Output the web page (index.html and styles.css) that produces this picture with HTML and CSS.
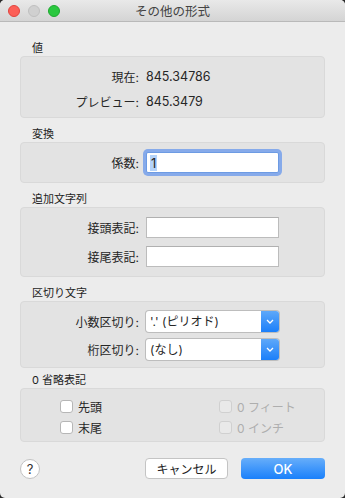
FILE: index.html
```html
<!DOCTYPE html>
<html lang="ja">
<head>
  <meta charset="UTF-8" />
  <title>その他の形式</title>
  <link rel="stylesheet" href="styles.css">
</head>
<body>
  <div class="window">
    <div class="titlebar">
      <div class="lights">
        <span class="light close"></span>
        <span class="light minimize"></span>
        <span class="light zoom"></span>
      </div>
      <div class="title">その他の形式</div>
      <div class="spacer"></div>
    </div>

    <div class="content">
      <div class="group">
        <div class="group-label">値</div>
        <div class="group-box values">
          <div class="field">
            <span class="field-label">現在:</span>
            <span class="value">845.34786</span>
          </div>
          <div class="field">
            <span class="field-label">プレビュー:</span>
            <span class="value">845.3479</span>
          </div>
        </div>
      </div>

      <div class="group">
        <div class="group-label">変換</div>
        <div class="group-box">
          <div class="field">
            <span class="field-label">係数:</span>
            <div class="input focused"><span class="selected">1</span></div>
          </div>
        </div>
      </div>

      <div class="group">
        <div class="group-label">追加文字列</div>
        <div class="group-box">
          <div class="field">
            <span class="field-label">接頭表記:</span>
            <div class="input"></div>
          </div>
          <div class="field">
            <span class="field-label">接尾表記:</span>
            <div class="input"></div>
          </div>
        </div>
      </div>

      <div class="group">
        <div class="group-label">区切り文字</div>
        <div class="group-box selects">
          <div class="field">
            <span class="field-label">小数区切り:</span>
            <div class="select">
              <span class="select-text">'.' (ピリオド)</span>
              <span class="select-arrow">
                <svg width="8" height="5" viewBox="0 0 8 5"><path d="M1 1 L4 4 L7 1" fill="none" stroke="#fff" stroke-width="1.3"/></svg>
              </span>
            </div>
          </div>
          <div class="field">
            <span class="field-label">桁区切り:</span>
            <div class="select">
              <span class="select-text">(なし)</span>
              <span class="select-arrow">
                <svg width="8" height="5" viewBox="0 0 8 5"><path d="M1 1 L4 4 L7 1" fill="none" stroke="#fff" stroke-width="1.3"/></svg>
              </span>
            </div>
          </div>
        </div>
      </div>

      <div class="group group-tight">
        <div class="group-label">0 省略表記</div>
        <div class="group-box checks">
          <label class="check"><span class="box"></span>先頭</label>
          <label class="check disabled"><span class="box"></span>0 フィート</label>
          <label class="check"><span class="box"></span>末尾</label>
          <label class="check disabled"><span class="box"></span>0 インチ</label>
        </div>
      </div>

      <div class="footer">
        <button class="help">?</button>
        <div class="actions">
          <button class="btn">キャンセル</button>
          <button class="btn primary">OK</button>
        </div>
      </div>
    </div>
  </div>
</body>
</html>
```

FILE: styles.css
```css
html {
  background: #2a2a2a;
}

body {
  margin: 0;
  font-family: "Inter", "Noto Sans CJK JP", sans-serif;
  font-size: 12px;
  color: #262626;
}

.window {
  width: 345px;
  height: 498px;
  background: #ececec;
  border-radius: 5px;
  overflow: hidden;
}

.titlebar {
  display: flex;
  align-items: center;
  height: 21px;
  background: linear-gradient(#e9e9e9, #d4d4d4);
  border-bottom: 1px solid #b9b9b9;
}

.lights {
  width: 68px;
  display: flex;
  gap: 8px;
  padding-left: 8px;
  box-sizing: border-box;
}

.light {
  width: 12px;
  height: 12px;
  border-radius: 50%;
  box-sizing: border-box;
}

.light.close {
  background: #fc5f57;
  border: 1px solid #e0443e;
}

.light.minimize {
  background: #d0d0d0;
  border: 1px solid #bfbfbf;
}

.light.zoom {
  background: #2ac83f;
  border: 1px solid #1ea82f;
}

.title {
  flex: 1;
  text-align: center;
  color: #444;
  font-size: 12.5px;
}

.spacer {
  width: 68px;
}

.content {
  padding: 20px 20px 0;
}

.group {
  margin-bottom: 10px;
}

.group-label {
  font-size: 11px;
  line-height: 13px;
  padding-left: 12px;
  margin-bottom: 1px;
  color: #1e1e1e;
}

.group-box {
  background: #e3e3e3;
  border: 1px solid #d9d9d9;
  border-radius: 4px;
  padding: 9px 0;
  display: flex;
  flex-direction: column;
  gap: 8px;
}

.group-box.values {
  padding: 7px 0 3px;
  gap: 0;
}

.group-box.selects {
  gap: 7px;
  padding-bottom: 7px;
}

.field {
  display: grid;
  grid-template-columns: 118px 133px;
  column-gap: 7px;
  align-items: center;
}

.values .field {
  height: 25px;
}

.field-label {
  text-align: right;
}

.value {
  font-size: 12.5px;
}

.input {
  height: 21px;
  box-sizing: border-box;
  background: #fff;
  border: 1px solid #bcbcbc;
  border-top-color: #b0b0b0;
  padding-left: 3px;
  display: flex;
  align-items: center;
  font-size: 13px;
}

.input.focused {
  border-color: #6d9be3;
  border-radius: 2px;
  box-shadow: 0 0 0 3px #86aaea;
}

.selected {
  background: #b4d3fa;
  line-height: 16px;
  padding: 0 1px;
}

.select {
  height: 21px;
  display: flex;
  background: #fff;
  border-radius: 3px;
  box-shadow: 0 0 0 1px #bdbdbd;
}

.select-text {
  flex: 1;
  padding-left: 4px;
  line-height: 21px;
}

.select-arrow {
  width: 18px;
  display: flex;
  align-items: center;
  justify-content: center;
  background: linear-gradient(#5ea8f9, #1b7ffa);
  border-radius: 0 3px 3px 0;
}

.group-tight {
  margin-top: -4px;
}

.checks {
  display: grid;
  grid-template-columns: 159px auto;
  grid-auto-rows: 21px;
  gap: 0;
  padding: 7px 0 3px 39px;
}

.check {
  display: flex;
  align-items: center;
  gap: 5px;
}

.check .box {
  width: 13px;
  height: 13px;
  box-sizing: border-box;
  background: #fff;
  border: 1px solid #b6b6b6;
  border-radius: 3px;
}

.check.disabled {
  color: #aeaeae;
}

.check.disabled .box {
  background: #e9e9e9;
  border-color: #d0d0d0;
}

.footer {
  display: flex;
  align-items: center;
  margin-top: 16px;
}

button {
  font-family: inherit;
  font-size: 12px;
  margin: 0;
  cursor: pointer;
}

.help {
  width: 20px;
  height: 20px;
  border-radius: 50%;
  border: 1px solid #c2c2c2;
  background: #fff;
  padding: 0;
  font-size: 13px;
  color: #333;
  margin-top: 1px;
}

.actions {
  margin-left: auto;
  display: flex;
  gap: 13px;
}

.btn {
  height: 21px;
  width: 83px;
  border: 1px solid #c4c4c4;
  border-radius: 4px;
  background: #fff;
  color: #222;
  padding: 0;
}

.btn.primary {
  width: 84px;
  border: none;
  background: linear-gradient(#67aefa, #1a80fb);
  color: #fff;
  font-weight: 500;
  font-size: 13px;
}
```
